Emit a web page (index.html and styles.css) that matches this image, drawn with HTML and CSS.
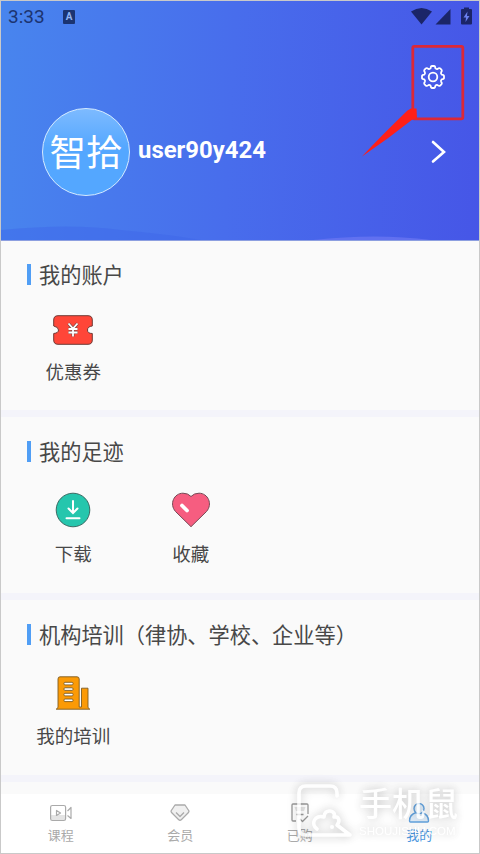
FILE: index.html
```html
<!DOCTYPE html>
<html lang="zh-CN">
<head>
<meta charset="utf-8">
<title>我的</title>
<link rel="stylesheet" href="styles.css">
</head>
<body>
<div class="screen">
  <header class="hero">
    <svg class="waves" viewBox="0 0 478 20" preserveAspectRatio="none"><path d="M0 10Q70 3 120 10Q165 14 200 20H0Z" fill="#3f66e8" opacity=".45"/><path d="M312 20Q375 13 430 20Z" fill="#6c78f2" opacity=".7"/></svg>
    <div class="status">
      <span class="clock">3:33</span>
      <span class="badge">A</span>
      <svg class="signals" width="62" height="20" viewBox="0 0 62 20" fill="#1b2568"><path d="M0 4.500Q10.500-2.500 21 4.500L10.500 17.500Z"/><path d="M24.500 17.500L39.500 2V17.500Z"/><path d="M51 2h2V.5h5V2h2a1 1 0 0 1 1 1v13.500a1 1 0 0 1-1 1h-9a1 1 0 0 1-1-1V3a1 1 0 0 1 1-1Z"/><path d="M56.500 4.500L52.500 10.500H55L54.500 15L58.500 9H56Z" fill="#6a80ef"/></svg>
    </div>
    <div class="toolbar">
      <svg width="26" height="26" viewBox="0 0 26 26" fill="none" stroke="#fff" stroke-width="1.800" stroke-linejoin="round"><path d="M10.600 4.300Q10.800 2 12 2H14Q15.200 2 15.400 4.300Q16.300 5.400 17.600 4.900Q19.200 3.600 20.200 4.400L21.600 5.800Q22.400 6.800 21.100 8.400Q20.600 9.700 21.700 10.600Q24 10.800 24 12V14Q24 15.200 21.700 15.400Q20.600 16.300 21.100 17.600Q22.400 19.200 21.600 20.200L20.200 21.600Q19.200 22.400 17.600 21.100Q16.300 20.600 15.400 21.700Q15.200 24 14 24H12Q10.800 24 10.600 21.700Q9.700 20.600 8.400 21.100Q6.800 22.400 5.800 21.600L4.400 20.200Q3.600 19.200 4.900 17.600Q5.400 16.300 4.300 15.400Q2 15.200 2 14V12Q2 10.800 4.300 10.600Q5.400 9.700 4.900 8.400Q3.600 6.800 4.400 5.800L5.800 4.400Q6.800 3.600 8.400 4.900Q9.700 5.400 10.600 4.300Z"/><circle cx="13" cy="13" r="4.300"/></svg>
    </div>
    <div class="profile">
      <div class="avatar">智拾</div>
      <div class="name">user90y424</div>
      <svg class="chevron" width="16" height="24" viewBox="0 0 16 24" fill="none" stroke="#fff" stroke-width="2.600" stroke-linecap="round"><path d="M2 2L13 12L2 21.500"/></svg>
    </div>
    <svg class="callout" width="106" height="120" viewBox="0 0 106 120"><rect x="52.800" y="7.300" width="50" height="72.500" rx="1.500" fill="none" stroke="#dc2837" stroke-width="2.800"/><path d="M2 117.500Q20 98 47.500 71.500L51 69.500H56.500L57 79L53 80Q28 100 2 117.500Z" fill="#ff2018"/></svg>
  </header>

  <main>
    <section class="panel account">
      <h2>我的账户</h2>
      <div class="items">
        <div class="item">
          <svg width="40" height="30" viewBox="0 0 40 30"><path d="M5 .7H35Q39.300.7 39.300 5V11Q34.500 11.500 34.500 15T39.300 18.500V25Q39.300 29.300 35 29.300H5Q.7 29.300.7 25V18.500Q5.500 18 5.500 15T.7 11V5Q.7.700 5 .7Z" fill="#ff4638" stroke="#6f3a36"/><path d="M15.500 8.500L20 13.500L24.500 8.500M15.500 14H24.500M15.500 17.500H24.500M20 13.500V21.500" fill="none" stroke="#794b47" stroke-width="3"/><path d="M15.500 8.500L20 13.500L24.500 8.500M15.500 14H24.500M15.500 17.500H24.500M20 13.500V21.500" fill="none" stroke="#fff" stroke-width="1.800"/></svg>
          <span>优惠券</span>
        </div>
      </div>
    </section>
    <section class="panel history">
      <h2>我的足迹</h2>
      <div class="items">
        <div class="item">
          <svg width="36" height="36" viewBox="0 0 36 36"><circle cx="18" cy="18" r="16.800" fill="#25c6ad" stroke="#3c6a63"/><path d="M18 9V20.500M13.500 16.500L18 21L22.500 16.500M11.500 26.200H24.500" fill="none" stroke="#fff" stroke-width="2" stroke-linecap="round"/></svg>
          <span>下载</span>
        </div>
        <div class="item">
          <svg width="40" height="36" viewBox="0 0 40 36"><path d="M20 34.700L4.500 19.500C-2 12 3 1.200 12 1.200Q17 1.200 20 4.500Q23 1.200 28 1.200C37 1.200 42 12 35.500 19.500Z" fill="#f65d80" stroke="#754955"/><path d="M11 13.500L16 18.500" stroke="#fff" stroke-width="3.800" stroke-linecap="round"/></svg>
          <span>收藏</span>
        </div>
      </div>
    </section>
    <section class="panel training">
      <h2>机构培训（律协、学校、企业等）</h2>
      <div class="items">
        <div class="item">
          <svg width="36" height="34" viewBox="0 0 36 34" stroke="#7d5b22" stroke-width=".9"><path d="M3 31.500V3Q3 .8 5 .8H22Q24.200.8 24.200 3V31H26.500V12.200H33V31.500L34.800 33.200H1.200Z" fill="#fb9a06"/><g fill="#fff"><rect x="9" y="6.300" width="9" height="2.600" rx="1"/><rect x="9" y="11.800" width="9" height="2.600" rx="1"/><rect x="9" y="17.300" width="9" height="2.600" rx="1"/><rect x="9" y="23" width="9" height="2.600" rx="1"/></g></svg>
          <span>我的培训</span>
        </div>
      </div>
    </section>
    <div class="panel next"></div>
  </main>

  <nav class="tabs">
    <div class="tab">
      <svg width="24" height="20" viewBox="0 0 24 20" fill="none" stroke="#aaa" stroke-width="1.200" stroke-linejoin="round"><path d="M2 12H16V17H2Z" fill="#e4e4e4" stroke="none"/><rect x="1.600" y="2.500" width="15" height="15" rx="1.800"/><path d="M7.500 7.500V12.500L11.500 10ZM18.500 8L22 4.500V15.500L18.500 12.500"/></svg>
      <span>课程</span>
    </div>
    <div class="tab">
      <svg width="24" height="20" viewBox="0 0 24 20" fill="none" stroke="#aaa" stroke-width="1.300" stroke-linejoin="round"><path d="M7 2H17L21 8Q21 9 20 10L13.500 16.500Q12 18 10.500 16.500L4 10Q3 9 3 8Z" fill="#f0f0f0"/><path d="M8 9.500L12 13.500L16 9.500"/></svg>
      <span>会员</span>
    </div>
    <div class="tab">
      <svg width="24" height="20" viewBox="0 0 24 20" fill="none" stroke="#999" stroke-width="1.300" stroke-linejoin="round"><path d="M8 18H5Q4 18 4 17V2Q4 1 5 1H19Q20 1 20 2V11M8.500 11.500H15.500M12 16L14.500 18.500L20 13"/><path d="M6.500 4H17.500L16 8H8Z" fill="#e4e4e4" stroke="none"/></svg>
      <span>已购</span>
    </div>
    <div class="tab active">
      <svg width="24" height="20" viewBox="0 0 24 20" fill="#e3f0fc" stroke="#64a5e2" stroke-width="1.400" stroke-linejoin="round"><path d="M9 9.500Q2.500 11.500 2.500 18Q2.500 19 3.500 19H20.500Q21.500 19 21.500 18Q21.500 11.500 15 9.500"/><circle cx="12" cy="5.600" r="5"/></svg>
      <span>我的</span>
    </div>
  </nav>

  <div class="watermark">
    <svg width="60" height="60" viewBox="0 0 60 60" fill="none" stroke="#fff" stroke-width="3.600" stroke-linecap="round" stroke-linejoin="round"><path d="M42 13V10Q42 3 35 3H11Q4 3 4 10V45Q4 52 11 52H55L42 42C46 37 43 33 39 34C42 27 29 25 29 34C20 31 15 41 22 46"/><circle cx="37" cy="44" r="2" fill="#fff" stroke="none"/></svg>
    <div class="mark-text"><b>手机鼠</b><small>SHOUJISHU.COM</small></div>
  </div>
</div>
</body>
</html>
```
FILE: styles.css
```css
* { box-sizing: border-box; }
body {
  margin: 0;
  font-family: "Noto Sans CJK SC", sans-serif;
  color: #484848;
}
svg { display: block; flex: none; }
.screen {
  position: relative;
  width: 480px;
  height: 854px;
  border: 1px solid #c9c9c9;
  background: #f4f4fa;
  display: flex;
  flex-direction: column;
  overflow: hidden;
}
.hero {
  position: relative;
  height: 240px;
  flex: none;
  background: linear-gradient(93deg, #4885ee 0%, #486dec 48%, #4656e7 100%);
  border-bottom: 1px solid #8d9fe0;
}
.waves {
  position: absolute;
  left: 0;
  bottom: 0;
  width: 100%;
  height: 20px;
}
.status {
  display: flex;
  align-items: center;
  height: 32px;
  padding: 0 6px 0 7px;
  color: #1c3470;
}
.clock {
  width: 55px;
  font: 19px/30px Roboto, sans-serif;
}
.badge {
  width: 12px;
  height: 14px;
  border-radius: 1px;
  background: #1b3471;
  color: #8fb3f2;
  font: bold 10px/14px Roboto, sans-serif;
  text-align: center;
}
.signals { margin: -1px 0 0 auto; }
.toolbar {
  display: flex;
  justify-content: flex-end;
  padding: 31px 33px 0 0;
}
.profile {
  display: flex;
  align-items: center;
  height: 88px;
  margin-top: 17.500px;
  padding: 0 32px 0 41px;
}
.avatar {
  width: 88px;
  height: 88px;
  border: 1.500px solid #d5ebff;
  border-radius: 50%;
  background: linear-gradient(#7dbaff, #54a7ff 45%, #54a7ff);
  color: #fff;
  font-size: 36.500px;
  line-height: 83px;
  white-space: nowrap;
  display: flex;
  justify-content: center;
}
.name {
  margin: -4px 0 0 8px;
  color: #fff;
  font: bold 23.900px/30px Roboto, sans-serif;
}
.chevron { margin-left: auto; }
.callout {
  position: absolute;
  left: 359px;
  top: 38px;
}
main { flex: none; }
.panel {
  background: #fafafa;
  margin-bottom: 7px;
  padding: 19px 0 0 26px;
}
.account { height: 169px; padding-top: 18px; }
.history { height: 176px; }
.training { height: 175px; }
.next { height: 12px; margin: 0; padding: 0; }
h2 {
  display: flex;
  align-items: center;
  margin: 0;
  height: 30px;
  font-size: 21.200px;
  font-weight: 400;
  line-height: 30px;
  white-space: nowrap;
}
h2::before {
  content: "";
  width: 4px;
  height: 21px;
  margin-right: 8px;
  background: #509ef5;
}
.items {
  display: flex;
  margin: 21px 0 0 -12.500px;
}
.history .items,
.training .items { margin-top: 24px; }
.item {
  width: 117.500px;
  display: flex;
  flex-direction: column;
  align-items: center;
}
.item svg { height: 40px; }
.item span {
  margin-top: 6px;
  font-size: 18.500px;
  line-height: 30px;
}
.history .item span { margin-top: 8px; }
.training .item span { margin-top: 7px; }
.tabs {
  display: flex;
  flex: 1;
  background: #fff;
}
.tab {
  flex: 1;
  display: flex;
  flex-direction: column;
  align-items: center;
  padding-top: 9px;
  color: #aaa;
}
.tab span {
  margin-top: 2px;
  font-size: 13px;
  line-height: 20px;
}
.tab.active { color: #4d98df; }
.watermark {
  position: absolute;
  left: 294px;
  top: 782px;
  display: flex;
  color: #fff;
  filter: drop-shadow(0 0 4px rgba(0, 0, 0, .18)) drop-shadow(0 0 6px rgba(0, 0, 0, .14));
  opacity: .8;
}
.mark-text {
  display: flex;
  flex-direction: column;
  margin-left: 4px;
}
.mark-text b {
  font-size: 33px;
  font-weight: 500;
  line-height: 39px;
}
.mark-text small {
  margin-top: 1px;
  font: 11.500px/16px "Liberation Sans", sans-serif;
}
```
